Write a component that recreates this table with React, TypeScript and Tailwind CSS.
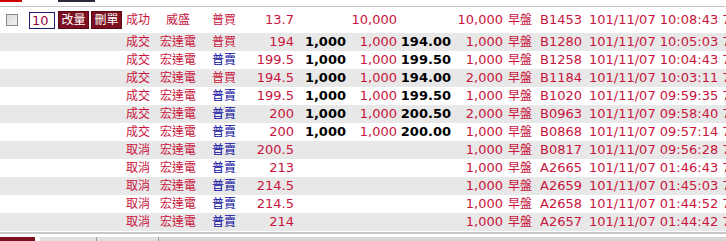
import React from 'react';

type Row = {
  status: string;
  stock: string;
  side: string;
  price: string;
  dealQty: string;
  qty: string;
  dealPrice: string;
  qty2: string;
  no: string;
  time: string;
};

const rows: Row[] = [
  { status: '成交', stock: '宏達電', side: '普買', price: '194', dealQty: '1,000', qty: '1,000', dealPrice: '194.00', qty2: '1,000', no: 'B1280', time: '10:05:03' },
  { status: '成交', stock: '宏達電', side: '普賣', price: '199.5', dealQty: '1,000', qty: '1,000', dealPrice: '199.50', qty2: '1,000', no: 'B1258', time: '10:04:43' },
  { status: '成交', stock: '宏達電', side: '普買', price: '194.5', dealQty: '1,000', qty: '1,000', dealPrice: '194.00', qty2: '2,000', no: 'B1184', time: '10:03:11' },
  { status: '成交', stock: '宏達電', side: '普賣', price: '199.5', dealQty: '1,000', qty: '1,000', dealPrice: '199.50', qty2: '1,000', no: 'B1020', time: '09:59:35' },
  { status: '成交', stock: '宏達電', side: '普賣', price: '200', dealQty: '1,000', qty: '1,000', dealPrice: '200.50', qty2: '2,000', no: 'B0963', time: '09:58:40' },
  { status: '成交', stock: '宏達電', side: '普賣', price: '200', dealQty: '1,000', qty: '1,000', dealPrice: '200.00', qty2: '1,000', no: 'B0868', time: '09:57:14' },
  { status: '取消', stock: '宏達電', side: '普賣', price: '200.5', dealQty: '', qty: '', dealPrice: '', qty2: '1,000', no: 'B0817', time: '09:56:28' },
  { status: '取消', stock: '宏達電', side: '普賣', price: '213', dealQty: '', qty: '', dealPrice: '', qty2: '1,000', no: 'A2665', time: '01:46:43' },
  { status: '取消', stock: '宏達電', side: '普賣', price: '214.5', dealQty: '', qty: '', dealPrice: '', qty2: '1,000', no: 'A2659', time: '01:45:03' },
  { status: '取消', stock: '宏達電', side: '普賣', price: '214.5', dealQty: '', qty: '', dealPrice: '', qty2: '1,000', no: 'A2658', time: '01:44:52' },
  { status: '取消', stock: '宏達電', side: '普賣', price: '214', dealQty: '', qty: '', dealPrice: '', qty2: '1,000', no: 'A2657', time: '01:44:42' },
];

const Cells: React.FC<{ r: Row }> = ({ r }) => (
  <>
    <div className="w-[203px] shrink-0 flex">
      <div className="w-[153px] text-right pr-[3px] text-[12px]">{r.status}</div>
      <div className="w-[50px] text-center text-[12px]">{r.stock}</div>
    </div>
    <div className={`w-[42px] shrink-0 text-center text-[12px] ${r.side === '普賣' ? 'text-[#0a0aa0]' : ''}`}>{r.side}</div>
    <div className="w-[52px] shrink-0 text-right pr-[3px]">{r.price}</div>
    <div className="w-[52px] shrink-0 text-right pr-[3px] font-bold text-black">{r.dealQty}</div>
    <div className="w-[51px] shrink-0 text-right pr-[3px]">{r.qty}</div>
    <div className="w-[54px] shrink-0 text-right pr-[3px] font-bold text-black">{r.dealPrice}</div>
    <div className="w-[52px] shrink-0 text-right pr-[3px]">{r.qty2}</div>
    <div className="w-[29px] shrink-0 pl-[2px] text-[12px]">早盤</div>
    <div className="w-[50px] shrink-0 pl-[5px]">{r.no}</div>
    <div className="shrink-0 pl-[4px] whitespace-nowrap">101/11/07 {r.time} 7</div>
  </>
);

export default function App() {
  return (
    <div className="w-[726px] h-[241px] overflow-hidden bg-white text-[13px] leading-[18px] text-[#c8143c] font-['DejaVu_Sans','Noto_Sans_CJK_TC',sans-serif]">
      <div className="h-[6px] flex items-start overflow-hidden">
        <div className="w-[22px] h-[2px] bg-[#cc0000]" />
        <div className="ml-[36px] w-[37px] h-[2px] bg-[#2a2a3a]" />
      </div>
      <div className="border-t border-[#c4c4c4]">
        <div className="h-[26px] flex items-center bg-white">
          <div className="w-[24px] shrink-0 flex justify-center">
            <div className="w-[12px] h-[12px] border border-[#8a8a8a] bg-gradient-to-br from-[#d8d8d8] to-[#f4f4f4]" />
          </div>
          <div className="w-[33px] shrink-0 pl-[5px]">
            <div className="w-[26px] h-[17px] border border-[#1c1c6c] text-[#9a0a3a] leading-[15px] pl-[2px]">10</div>
          </div>
          <div className="w-[67px] shrink-0 flex gap-[2px] pl-[1px]">
            <div className="w-[31px] h-[18px] bg-[#7a1020] border border-[#5a0a14] text-white text-[12px] leading-[16px] text-center">改量</div>
            <div className="w-[31px] h-[18px] bg-[#7a1020] border border-[#5a0a14] text-white text-[12px] leading-[16px] text-center">刪單</div>
          </div>
          <div className="w-[29px] shrink-0 text-right pr-[3px] text-[12px]">成功</div>
          <div className="w-[50px] shrink-0 text-center text-[12px]">威盛</div>
          <div className="w-[42px] shrink-0 text-center text-[12px]">普買</div>
          <div className="w-[52px] shrink-0 text-right pr-[3px]">13.7</div>
          <div className="w-[52px] shrink-0" />
          <div className="w-[51px] shrink-0 text-right pr-[3px]">10,000</div>
          <div className="w-[54px] shrink-0" />
          <div className="w-[52px] shrink-0 text-right pr-[3px]">10,000</div>
          <div className="w-[29px] shrink-0 pl-[2px] text-[12px]">早盤</div>
          <div className="w-[50px] shrink-0 pl-[5px]">B1453</div>
          <div className="shrink-0 pl-[4px] whitespace-nowrap">101/11/07 10:08:43 7</div>
        </div>
        {rows.map((r, i) => (
          <div key={r.no} className={`h-[18px] flex items-center ${i % 2 === 0 ? 'bg-[#e8e8e8]' : 'bg-white'}`}>
            <Cells r={r} />
          </div>
        ))}
      </div>
      <div className="mt-[1px] border-t-2 border-[#c8c8c8]" />
      <div className="mt-[3px] h-[6px] flex bg-[#d8d8d8]">
        <div className="w-[35px] bg-[#7a1020]" />
        <div className="w-[5px] bg-white" />
        <div className="w-[57px] bg-[#e0e0e0] border-r border-[#a0a0a0]" />
        <div className="w-[62px] bg-[#e0e0e0] border-r border-[#a0a0a0]" />
      </div>
    </div>
  );
}
